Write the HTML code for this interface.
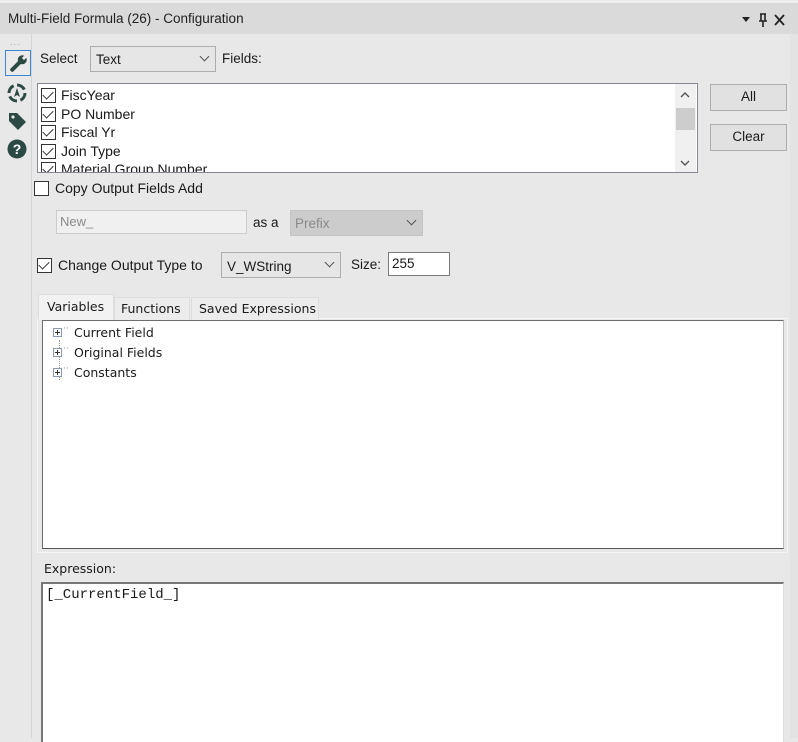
<!DOCTYPE html>
<html><head><meta charset="utf-8"><style>
*{box-sizing:border-box;margin:0;padding:0}
body{width:798px;height:738px;overflow:hidden;background:#e8e8e8;font-family:"Liberation Sans",sans-serif;font-size:13.5px;color:#1a1a1a;position:relative}
.a{position:absolute;white-space:nowrap}
.title{left:0;top:3px;width:798px;height:31px;background:#dadada}
.title span{position:absolute;left:8px;top:8px;font-size:13.5px;color:#222}
.left{left:0;top:34px;width:32px;height:704px;background:#e8e8e8;border-right:1px solid #d4d4d4}
.dd{background:#e6e6e6;border:1px solid #adadad}
.dd:after{content:"";position:absolute;right:7px;top:6px;width:6px;height:6px;border-right:1.3px solid #555;border-bottom:1.3px solid #555;transform:rotate(45deg)}
.cb{width:15px;height:15px;border:1px solid #333;background:#fff}
.ck:after{content:"";position:absolute;left:3px;top:0px;width:5px;height:9px;border-right:1.5px solid #333;border-bottom:1.5px solid #333;transform:rotate(45deg)}
.btn{background:#e1e1e1;border:1px solid #adadad;text-align:center;line-height:24px}
.white{background:#fff}
.row{position:absolute;left:3px;height:18px;line-height:18px;font-size:14px;white-space:nowrap;width:600px}
.row .cb{position:absolute;left:0;top:2px;width:15px;height:15px}
.row span{position:absolute;left:20px;white-space:nowrap}
.tree{position:absolute;left:10px;font-family:"DejaVu Sans",sans-serif;font-size:12.5px}
.pl{position:absolute;left:0;top:3px;width:9px;height:9px;border:1px solid #8a9ab0;background:#fff}
.pl:before{content:"";position:absolute;left:1px;top:3px;width:5px;height:1px;background:#333}
.pl:after{content:"";position:absolute;left:3px;top:1px;width:1px;height:5px;background:#333}
</style></head><body>
<div class="a" style="left:0;top:0;width:798px;height:3px;background:#eee"></div>
<div class="a title"><span>Multi-Field Formula (26) - Configuration</span>
<svg class="a" style="left:740px;top:10px" width="48" height="14"><path d="M2 4h8l-4 5z" fill="#222"/><path d="M20 1h6M21 1v7M25 1v7M19 8h8M23 8v6" stroke="#222" stroke-width="1.6" fill="none"/><path d="M35 2l9 10M44 2l-9 10" stroke="#222" stroke-width="1.8"/></svg></div>
<div class="a left">
<div class="a" style="left:10px;top:6px;font-size:8px;color:#999;letter-spacing:1px">···</div>
<div class="a" style="left:5px;top:16px;width:26px;height:26px;border:1px solid #3a86d6;background:#eaeaea"></div>
<svg class="a" style="left:7px;top:19px" width="22" height="22"><g transform="rotate(45 11 11)"><rect x="9" y="8" width="4" height="13" rx="1.5" fill="#2c4a44"/><circle cx="11" cy="5" r="4.5" fill="#2c4a44"/><rect x="9.5" y="0" width="3" height="4" fill="#eaeaea"/></g></svg>
<svg class="a" style="left:6px;top:48px" width="22" height="22"><circle cx="11" cy="11" r="8" fill="none" stroke="#2c4a44" stroke-width="3" stroke-dasharray="9 3.5"/><path d="M11 6l3 9-3-2-3 2z" fill="#2c4a44"/></svg>
<svg class="a" style="left:6px;top:76px" width="22" height="22"><path d="M3 3h8l9 9-8 8-9-9z" fill="#2c4a44"/><circle cx="7" cy="7" r="1.6" fill="#e8e8e8"/></svg>
<svg class="a" style="left:6px;top:104px" width="22" height="22"><circle cx="11" cy="11" r="9.5" fill="#2c4a44"/><text x="11" y="16" font-size="14" font-weight="bold" text-anchor="middle" fill="#fff" font-family="Liberation Sans">?</text></svg>
</div>
<div class="a" style="left:40px;top:51px">Select</div>
<div class="a dd" style="left:90px;top:46px;width:126px;height:26px"><span class="a" style="left:5px;top:5px">Text</span></div>
<div class="a" style="left:222px;top:51px">Fields:</div>
<div class="a white" style="left:37px;top:83px;width:661px;height:90px;border:1px solid #828790;overflow:hidden">
<div class="row" style="top:2px"><div class="cb ck"></div><span>FiscYear</span></div>
<div class="row" style="top:20.5px"><div class="cb ck"></div><span>PO Number</span></div>
<div class="row" style="top:39px"><div class="cb ck"></div><span>Fiscal Yr</span></div>
<div class="row" style="top:57.5px"><div class="cb ck"></div><span>Join Type</span></div>
<div class="row" style="top:76px"><div class="cb ck"></div><span>Material Group Number</span></div>
<div class="a" style="left:637px;top:0;width:21px;height:88px;background:#f0f0f0"></div>
<div class="a" style="left:638px;top:24px;width:19px;height:22px;background:#cdcdcd"></div>
<svg class="a" style="left:641px;top:6px" width="12" height="80"><path d="M2 7l4-4 4 4" stroke="#555" stroke-width="1.4" fill="none"/><path d="M2 71l4 4 4-4" stroke="#555" stroke-width="1.4" fill="none"/></svg>
</div>
<div class="a btn" style="left:710px;top:84px;width:77px;height:27px">All</div>
<div class="a btn" style="left:710px;top:124px;width:77px;height:27px">Clear</div>
<div class="a cb" style="left:34px;top:181px"></div>
<div class="a" style="left:55px;top:180px;font-size:14px">Copy Output Fields Add</div>
<div class="a" style="left:56px;top:210px;width:191px;height:24px;background:#f0f0f0;border:1px solid #ccc;color:#8a8a8a;padding:3px 3px;font-size:13px">New_</div>
<div class="a" style="left:253px;top:215px">as a</div>
<div class="a dd" style="left:290px;top:210px;width:133px;height:26px;background:#cccccc;border-color:#c4c4c4;color:#8a8a8a"><span class="a" style="left:4px;top:5px">Prefix</span></div>
<div class="a cb ck" style="left:37px;top:258px"></div>
<div class="a" style="left:58px;top:257px;font-size:14px">Change Output Type to</div>
<div class="a dd" style="left:221px;top:252px;width:120px;height:26px"><span class="a" style="left:5px;top:6px">V_WString</span></div>
<div class="a" style="left:351px;top:257px">Size:</div>
<div class="a white" style="left:388px;top:252px;width:62px;height:24px;border:1px solid #7a7a7a;padding:3px 3px">255</div>
<div class="a" style="left:37px;top:318px;width:751px;height:235px;border:1px solid #f4f4f4"></div>
<div class="a" style="left:38px;top:294px;width:76px;height:26px;background:#f2f2f2;border:1px solid #ddd;border-bottom:none;font-family:'DejaVu Sans',sans-serif;font-size:12.5px;padding:4px 0 0 8px">Variables</div>
<div class="a" style="left:114px;top:297px;width:76px;height:23px;background:#ececec;border:1px solid #ddd;border-bottom:none;font-family:'DejaVu Sans',sans-serif;font-size:12.5px;padding:3px 0 0 6px">Functions</div>
<div class="a" style="left:191px;top:297px;width:128px;height:23px;background:#ececec;border:1px solid #ddd;border-bottom:none;font-family:'DejaVu Sans',sans-serif;font-size:12.5px;padding:3px 0 0 7px">Saved Expressions</div>
<div class="a white" style="left:42px;top:320px;width:742px;height:229px;border:1px solid #6d6d6d;border-right-color:#bbb;border-bottom-color:#555">
<div class="a" style="left:16px;top:19px;height:40px;border-left:1px dotted #999"></div>
<div class="tree" style="top:4px"><div class="pl"></div><span style="position:absolute;left:10px;top:-1px;color:#999;font-size:9px">··</span><span style="position:absolute;left:21px;white-space:nowrap">Current Field</span></div>
<div class="tree" style="top:24px"><div class="pl"></div><span style="position:absolute;left:10px;top:-1px;color:#999;font-size:9px">··</span><span style="position:absolute;left:21px;white-space:nowrap">Original Fields</span></div>
<div class="tree" style="top:44px"><div class="pl"></div><span style="position:absolute;left:10px;top:-1px;color:#999;font-size:9px">··</span><span style="position:absolute;left:21px;white-space:nowrap">Constants</span></div>
</div>
<div class="a" style="left:44px;top:561px;font-family:'DejaVu Sans',sans-serif;font-size:12.5px">Expression:</div>
<div class="a white" style="left:41px;top:582px;width:743px;height:160px;border:2px solid #777;border-right:1px solid #ddd;border-bottom:none">
<div class="a" style="left:3px;top:3px;font-family:'Liberation Mono',monospace;font-size:14px">[_CurrentField_]</div></div>
<div class="a" style="left:790px;top:34px;width:8px;height:704px;background:#e3e3e3"></div>
</body></html>
